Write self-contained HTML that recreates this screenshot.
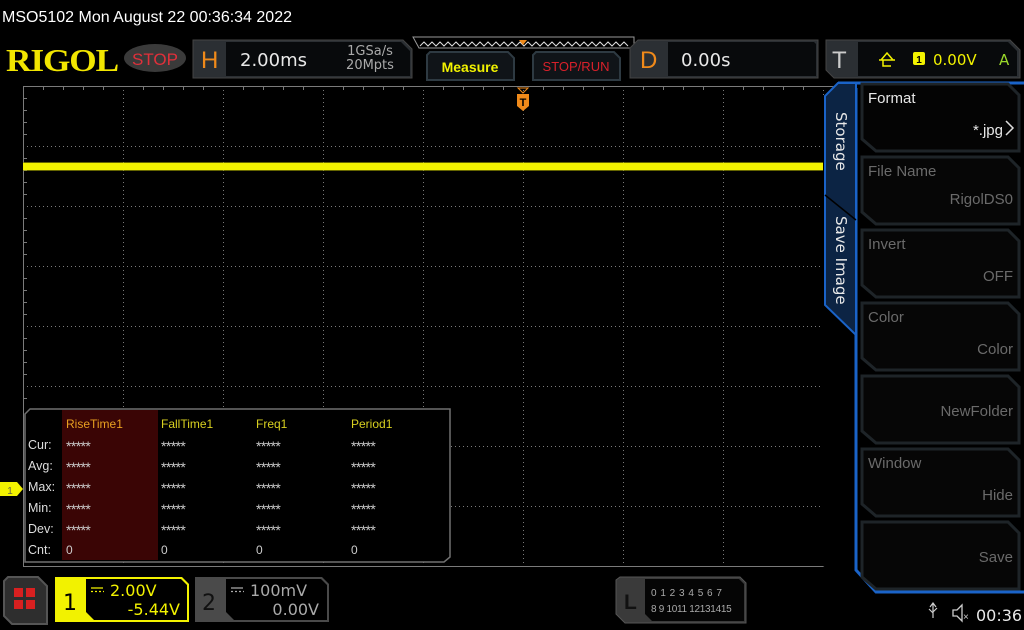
<!DOCTYPE html>
<html><head><meta charset="utf-8"><style>
html,body{margin:0;padding:0;background:#000;width:1024px;height:630px;overflow:hidden}
svg{display:block}
text{font-family:"Liberation Sans","DejaVu Sans",sans-serif}
.d{font-family:"DejaVu Sans","Liberation Sans",sans-serif}
.serif{font-family:"Liberation Serif","DejaVu Serif",serif}
</style></head><body>
<svg width="1024" height="630" viewBox="0 0 1024 630" xmlns="http://www.w3.org/2000/svg">
<rect width="1024" height="630" fill="#000"/>
<text x="2" y="22" fill="#fff" font-size="16">MSO5102  Mon August 22 00:36:34 2022</text>

<!-- logo -->
<text x="6" y="71" fill="#f2e600" font-size="32" font-weight="bold" class="serif" letter-spacing="-1" textLength="112" lengthAdjust="spacingAndGlyphs">RIGOL</text>
<ellipse cx="155" cy="58" rx="31" ry="14" fill="#3a3a3a"/>
<text x="155" y="65" fill="#e0303a" font-size="17" text-anchor="middle">STOP</text>

<!-- H box -->
<path d="M193 40 L403 40 L412 49 L412 78 L193 78 Z" fill="#2b2f33" stroke="#444" />
<path d="M226 42 L401 42 L410 51 L410 76 L226 76 Z" fill="#080a0c"/>
<text x="201" y="68" fill="#f08a1a" font-size="24">H</text>
<text x="240" y="66" fill="#e8e8e8" font-size="18" class="d">2.00ms</text>
<text x="370" y="55" fill="#aaa" font-size="13" text-anchor="middle" class="d">1GSa/s</text>
<text x="370" y="69" fill="#aaa" font-size="13" text-anchor="middle" class="d">20Mpts</text>

<!-- zigzag -->
<path d="M413 37 L634 37 L634 48 L419 48 Z" fill="#000" stroke="#999"/>
<polyline points="420,46 424,42 428,46 432,42 436,46 440,42 444,46 448,42 452,46 456,42 460,46 464,42 468,46 472,42 476,46 480,42 484,46 488,42 492,46 496,42 500,46 504,42 508,46 512,42 516,46 520,42 524,46 528,42 532,46 536,42 540,46 544,42 548,46 552,42 556,46 560,42 564,46 568,42 572,46 576,42 580,46 584,42 588,46 592,42 596,46 600,42 604,46 608,42 612,46 616,42 620,46 624,42 628,46" fill="none" stroke="#ddd" stroke-width="1"/>
<path d="M519 40 L527 40 L523 45 Z" fill="#f08a1a"/>

<!-- buttons -->
<path d="M430 52 L508 52 L514 58 L514 80 L427 80 L427 55 Z" fill="#101418" stroke="#2e3a42" stroke-width="2"/>
<text x="470" y="72" fill="#f2f200" font-size="14" font-weight="bold" text-anchor="middle">Measure</text>
<path d="M536 52 L614 52 L620 58 L620 80 L533 80 L533 55 Z" fill="#101418" stroke="#2e3a42" stroke-width="2"/>
<text x="576" y="71" fill="#d8202a" font-size="13" text-anchor="middle">STOP/RUN</text>

<!-- D box -->
<path d="M638 40 L818 40 L818 78 L630 78 L630 48 Z" fill="#2b2f33" stroke="#444"/>
<path d="M668 42 L814 42 L816 44 L816 76 L668 76 Z" fill="#080a0c"/>
<text x="640" y="68" fill="#f08a1a" font-size="24">D</text>
<text x="681" y="66" fill="#e8e8e8" font-size="18" class="d">0.00s</text>

<!-- T box -->
<path d="M826 40 L1010 40 L1020 50 L1020 78 L834 78 L826 70 Z" fill="#2b2f33" stroke="#444"/>
<path d="M858 42 L1008 42 L1017 51 L1017 76 L858 76 Z" fill="#080a0c"/>
<text x="832" y="68" fill="#ccc" font-size="24">T</text>
<path d="M881 60 L887 53 L893 60 M883 60 L883 66 L891 66 M879 60 L895 60" fill="none" stroke="#f2f200" stroke-width="1.5"/>
<rect x="913" y="52" width="12" height="13" rx="2" fill="#f2f200"/>
<text x="919" y="63" fill="#000" font-size="10" text-anchor="middle" font-weight="bold">1</text>
<text x="933" y="65" fill="#f2f200" font-size="15" class="d">0.00V</text>
<text x="999" y="65" fill="#9ad82a" font-size="15" class="d">A</text>

<!-- grid -->
<g stroke="#7a7a7a" stroke-width="1" fill="none">
<line x1="23.5" y1="86" x2="23.5" y2="566"/>
<line x1="23" y1="86.5" x2="1024" y2="86.5"/>
<line x1="23" y1="566.5" x2="1024" y2="566.5"/>
<g stroke-dasharray="1 3">
<line x1="123.5" y1="86" x2="123.5" y2="566"/><line x1="223.5" y1="86" x2="223.5" y2="566"/><line x1="323.5" y1="86" x2="323.5" y2="566"/><line x1="423.5" y1="86" x2="423.5" y2="566"/><line x1="523.5" y1="86" x2="523.5" y2="566"/><line x1="623.5" y1="86" x2="623.5" y2="566"/><line x1="723.5" y1="86" x2="723.5" y2="566"/><line x1="823.5" y1="86" x2="823.5" y2="566"/>
<line x1="23" y1="146.5" x2="1024" y2="146.5"/><line x1="23" y1="206.5" x2="1024" y2="206.5"/><line x1="23" y1="266.5" x2="1024" y2="266.5"/><line x1="23" y1="326.5" x2="1024" y2="326.5"/><line x1="23" y1="386.5" x2="1024" y2="386.5"/><line x1="23" y1="446.5" x2="1024" y2="446.5"/><line x1="23" y1="506.5" x2="1024" y2="506.5"/>
</g>
</g>
<g stroke="#7a7a7a" stroke-width="1">
<path d="M43.5 86v4M63.5 86v4M83.5 86v4M103.5 86v4M143.5 86v4M163.5 86v4M183.5 86v4M203.5 86v4M243.5 86v4M263.5 86v4M283.5 86v4M303.5 86v4M343.5 86v4M363.5 86v4M383.5 86v4M403.5 86v4M443.5 86v4M463.5 86v4M483.5 86v4M503.5 86v4M543.5 86v4M563.5 86v4M583.5 86v4M603.5 86v4M643.5 86v4M663.5 86v4M683.5 86v4M703.5 86v4M743.5 86v4M763.5 86v4M783.5 86v4M803.5 86v4"/>
<path d="M23 98.5h4M23 110.5h4M23 122.5h4M23 134.5h4M23 158.5h4M23 170.5h4M23 182.5h4M23 194.5h4M23 218.5h4M23 230.5h4M23 242.5h4M23 254.5h4M23 278.5h4M23 290.5h4M23 302.5h4M23 314.5h4M23 338.5h4M23 350.5h4M23 362.5h4M23 374.5h4M23 398.5h4"/>
</g>
<!-- trace -->
<rect x="23" y="163" width="800" height="7" fill="#f2f200"/>
<rect x="23" y="162" width="800" height="1" fill="#a8a800" opacity="0.6"/>
<rect x="23" y="170" width="800" height="1" fill="#a8a800" opacity="0.6"/>

<!-- trigger marker -->
<path d="M518 88 L528 88 L523 93 Z" fill="none" stroke="#f08a1a"/>
<path d="M517 94 L529 94 L529 106 L523 111 L517 106 Z" fill="#f08a1a"/>
<text x="523" y="106" fill="#000" font-size="11" text-anchor="middle" font-weight="bold">T</text>

<!-- measure table -->
<path d="M30 409 L450 409 L450 557 L444 562 L25 562 L25 414 Z" fill="#000" stroke="#707070" stroke-width="1.5"/>
<rect x="62" y="410" width="96" height="150" fill="#3a0505"/>
<g font-size="12" class="d">
<text x="66" y="428" fill="#e8a020">RiseTime1</text>
<text x="161" y="428" fill="#d8d020">FallTime1</text>
<text x="256" y="428" fill="#d8d020">Freq1</text>
<text x="351" y="428" fill="#d8d020">Period1</text>
<g fill="#ddd" font-size="12.5">
<text x="28" y="449">Cur:</text><text x="28" y="470">Avg:</text><text x="28" y="491">Max:</text><text x="28" y="512">Min:</text><text x="28" y="533">Dev:</text><text x="28" y="554">Cnt:</text>
</g>
<g fill="#ccc" font-size="14" style="font-family:'Liberation Sans',sans-serif" letter-spacing="-0.6">
<text x="66" y="451">*****</text><text x="161" y="451">*****</text><text x="256" y="451">*****</text><text x="351" y="451">*****</text>
<text x="66" y="472">*****</text><text x="161" y="472">*****</text><text x="256" y="472">*****</text><text x="351" y="472">*****</text>
<text x="66" y="493">*****</text><text x="161" y="493">*****</text><text x="256" y="493">*****</text><text x="351" y="493">*****</text>
<text x="66" y="514">*****</text><text x="161" y="514">*****</text><text x="256" y="514">*****</text><text x="351" y="514">*****</text>
<text x="66" y="535">*****</text><text x="161" y="535">*****</text><text x="256" y="535">*****</text><text x="351" y="535">*****</text>
</g>
<g fill="#ccc">
<text x="66" y="554">0</text><text x="161" y="554">0</text><text x="256" y="554">0</text><text x="351" y="554">0</text>
</g>
</g>
<!-- ch1 marker -->
<path d="M0 482 L17 482 L23 489 L17 496 L0 496 Z" fill="#f2f200"/>
<text x="10" y="494" fill="#664" font-size="10" text-anchor="middle">1</text>

<!-- side menu -->
<path d="M840 80 L1024 80 L1024 600 L870 600 L823 566 L823 96 Z" fill="#000"/>
<path d="M838 83 L1024 83 M856 88 L856 570 L876 592 L1024 592" fill="none" stroke="#1a63c8" stroke-width="3"/>
<path d="M838 83 L825 96 L825 305 L856 335 L856 88 L856 83 Z" fill="#0c2444" stroke="#1a63c8" stroke-width="2"/>
<line x1="825" y1="195" x2="856" y2="220" stroke="#000" stroke-width="1.5"/>
<text transform="translate(836,112) rotate(90)" fill="#e8e8e8" font-size="15" class="d">Storage</text>
<text transform="translate(836,216) rotate(90)" fill="#e8e8e8" font-size="15" class="d">Save Image</text>

<g stroke="#1e2428" stroke-width="3" fill="#060606">
<path d="M862 84 L1008 84 L1019 95 L1019 151 L876 151 L862 139 Z" fill="#040404"/>
<path d="M862 157 L1008 157 L1019 168 L1019 224 L876 224 L862 212 Z"/>
<path d="M862 230 L1008 230 L1019 241 L1019 297 L876 297 L862 285 Z"/>
<path d="M862 303 L1008 303 L1019 314 L1019 370 L876 370 L862 358 Z"/>
<path d="M862 376 L1008 376 L1019 387 L1019 443 L876 443 L862 431 Z"/>
<path d="M862 449 L1008 449 L1019 460 L1019 516 L876 516 L862 504 Z"/>
<path d="M862 522 L1008 522 L1019 533 L1019 589 L876 589 L862 577 Z"/>
</g>
<g font-size="15" class="d">
<text x="868" y="103" fill="#e8e8e8">Format</text>
<text x="1003" y="135" fill="#e8e8e8" text-anchor="end">*.jpg</text>
<path d="M1006 121 L1013 128 L1006 135" fill="none" stroke="#ddd" stroke-width="1.5"/>
<text x="868" y="176" fill="#6a6a6a">File Name</text>
<text x="1013" y="204" fill="#6a6a6a" text-anchor="end">RigolDS0</text>
<text x="868" y="249" fill="#6a6a6a">Invert</text>
<text x="1013" y="281" fill="#6a6a6a" text-anchor="end">OFF</text>
<text x="868" y="322" fill="#6a6a6a">Color</text>
<text x="1013" y="354" fill="#6a6a6a" text-anchor="end">Color</text>
<text x="1013" y="416" fill="#6a6a6a" text-anchor="end">NewFolder</text>
<text x="868" y="468" fill="#6a6a6a">Window</text>
<text x="1013" y="500" fill="#6a6a6a" text-anchor="end">Hide</text>
<text x="1013" y="562" fill="#6a6a6a" text-anchor="end">Save</text>
</g>

<!-- bottom bar -->
<path d="M8 577 L38 577 L47 586 L47 624 L12 624 L4 616 L4 581 Z" fill="#2e2e2e" stroke="#555" stroke-width="2"/>
<rect x="14" y="588" width="9" height="9" fill="#d82020"/><rect x="26" y="588" width="9" height="9" fill="#d82020"/>
<rect x="14" y="600" width="9" height="9" fill="#d82020"/><rect x="26" y="600" width="9" height="9" fill="#d82020"/>

<path d="M55 577 L182 577 L189 584 L189 622 L55 622 Z" fill="#f2f200"/>
<path d="M86 579 L181 579 L187 585 L187 620 L94 620 L86 612 Z" fill="#000"/>
<text x="63" y="610" fill="#000" font-size="22" class="d">1</text>
<path d="M91 588h12M91 591.5h2M95 591.5h2M99 591.5h2M103 591.5h1" stroke="#f2f200" stroke-width="1.3"/>
<text x="110" y="596" fill="#f2f200" font-size="16" class="d">2.00V</text>
<text x="180" y="615" fill="#f2f200" font-size="16" class="d" text-anchor="end">-5.44V</text>

<path d="M195 577 L322 577 L329 584 L329 622 L195 622 Z" fill="#4a4a4a"/>
<path d="M226 579 L321 579 L327 585 L327 620 L234 620 L226 612 Z" fill="#000"/>
<text x="202" y="610" fill="#111" font-size="22" class="d">2</text>
<path d="M231 588h12M231 591.5h2M235 591.5h2M239 591.5h2M243 591.5h1" stroke="#aaa" stroke-width="1.3"/>
<text x="250" y="596" fill="#aaa" font-size="16" class="d">100mV</text>
<text x="319" y="615" fill="#aaa" font-size="16" class="d" text-anchor="end">0.00V</text>

<path d="M620 577 L740 577 L746 583 L746 623 L625 623 L616 614 L616 580 Z" fill="#3a3a3a" stroke="#555"/>
<path d="M645 579 L739 579 L744 584 L744 621 L652 621 L645 614 Z" fill="#050505"/>
<text x="624" y="609" fill="#111" font-size="21" font-weight="bold">L</text>
<text x="651" y="596" fill="#aaa" font-size="10" letter-spacing="0.5">0 1 2 3  4 5 6 7</text>
<text x="651" y="612" fill="#aaa" font-size="10" letter-spacing="-0.3">8 9 1011 12131415</text>

<path d="M933 603v15M930 607l3-4 3 4M929 609l4 4M937 608l-4 4" fill="none" stroke="#ccc" stroke-width="1.2"/>
<path d="M953 610h4l5-5v16l-5-5h-4z" fill="none" stroke="#ccc" stroke-width="1.3"/>
<text x="963" y="620" fill="#ccc" font-size="10">×</text>
<text x="976" y="621" fill="#e8e8e8" font-size="16" class="d">00:36</text>
</svg>
</body></html>
